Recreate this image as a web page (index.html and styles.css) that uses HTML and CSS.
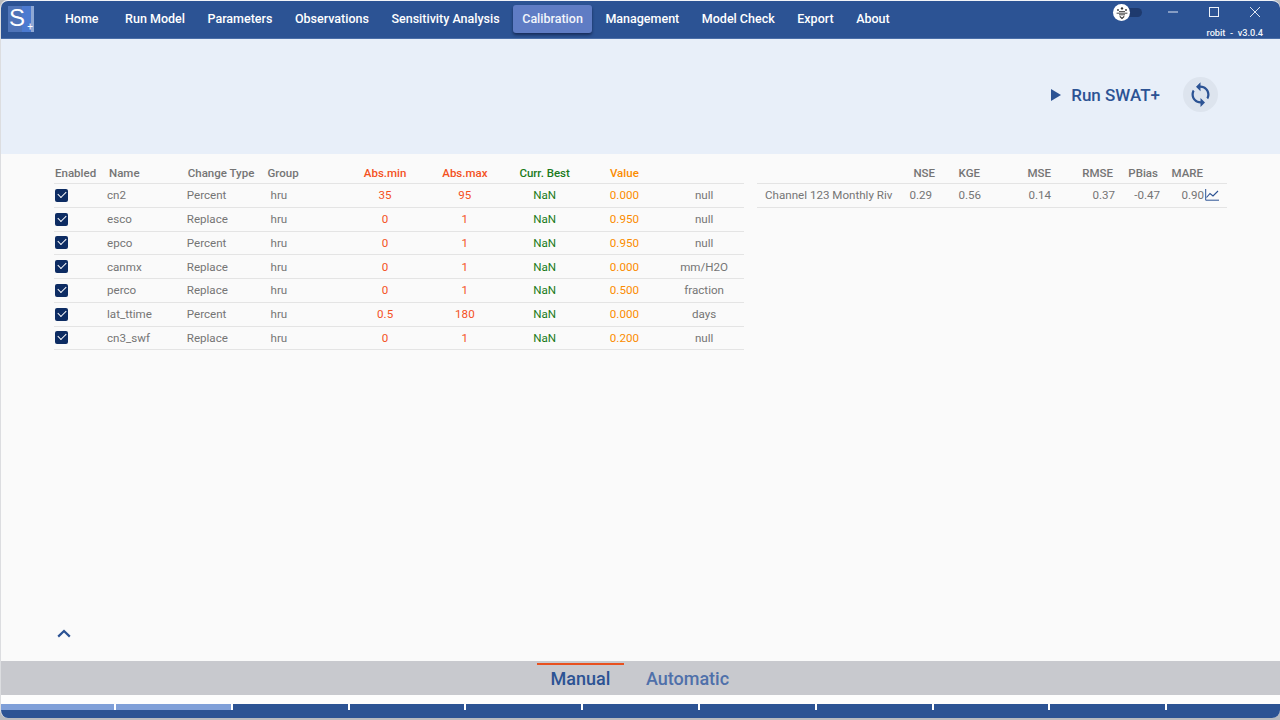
FILE: index.html
```html
<!DOCTYPE html>
<html lang="en">
<head>
<meta charset="utf-8">
<title>SWAT+ Calibration</title>
<link rel="stylesheet" href="styles.css">
</head>
<body>
<div class="window">
  <header class="topbar">
    <div class="logo"><span class="logo-s">S</span><span class="logo-plus">+</span></div>
    <nav class="nav">
      <a class="nav-item home">Home</a>
      <a class="nav-item">Run Model</a>
      <a class="nav-item">Parameters</a>
      <a class="nav-item">Observations</a>
      <a class="nav-item">Sensitivity Analysis</a>
      <a class="nav-item active">Calibration</a>
      <a class="nav-item">Management</a>
      <a class="nav-item">Model Check</a>
      <a class="nav-item">Export</a>
      <a class="nav-item">About</a>
    </nav>
    <div class="winbox">
      <div class="winctl">
        <div class="toggle">
          <span class="knob">
            <svg viewBox="0 0 16 16" width="16" height="16"><circle cx="8" cy="3.4" r="1.2" fill="#333"/><circle cx="4" cy="5" r=".9" fill="#333"/><circle cx="12" cy="5" r=".9" fill="#333"/><path d="M2.6 8.2h10.8M5 6.6h6M5 9.8h6" stroke="#333" stroke-width=".9" fill="none"/><path d="M5.8 11.4 8 13.4l2.2-2" stroke="#333" stroke-width="1.2" fill="none"/></svg>
          </span>
        </div>
        <svg class="wc wc-min" viewBox="0 0 10 10" width="10" height="10"><path d="M0 5h10" stroke="#dfe6f2" stroke-width="1"/></svg>
        <svg class="wc wc-max" viewBox="0 0 10 10" width="10" height="10"><rect x=".5" y=".5" width="9" height="9" fill="none" stroke="#eef2f8" stroke-width="1"/></svg>
        <svg class="wc wc-close" viewBox="0 0 10 10" width="10" height="10"><path d="M0 0l10 10M10 0 0 10" stroke="#dfe6f2" stroke-width="1"/></svg>
      </div>
      <div class="version">robit &nbsp;-&nbsp; v3.0.4</div>
    </div>
  </header>

  <section class="banner">
    <button class="run">
      <svg viewBox="0 0 10 12" width="10" height="12"><path d="M0 0l10 6-10 6z" fill="#2c5394"/></svg>
      <span>Run SWAT+</span>
    </button>
    <button class="refresh">
      <svg viewBox="0 0 24 24" width="27" height="27"><path fill="#2c5394" d="M12 4V1L8 5l4 4V6c3.31 0 6 2.69 6 6 0 1.01-.25 1.97-.7 2.8l1.46 1.46C19.54 15.03 20 13.57 20 12c0-4.42-3.58-8-8-8zm0 14c-3.31 0-6-2.69-6-6 0-1.01.25-1.97.7-2.8L5.24 7.74C4.46 8.97 4 10.43 4 12c0 4.42 3.58 8 8 8v3l4-4-4-4v3z"/></svg>
    </button>
  </section>

  <main class="content">
    <div class="tables">
      <div class="ptable">
        <div class="prow phead">
          <span class="h-en">Enabled</span><span class="h-name">Name</span><span class="h-type">Change Type</span><span class="h-group">Group</span>
          <span class="ctr red">Abs.min</span><span class="ctr red">Abs.max</span><span class="ctr green">Curr. Best</span><span class="ctr orange">Value</span><span></span>
        </div>
        <div class="prow"><span class="check"></span><span class="cell">cn2</span><span class="cell">Percent</span><span class="c-group">hru</span><span class="ctr red">35</span><span class="ctr red">95</span><span class="ctr green">NaN</span><span class="ctr orange">0.000</span><span class="ctr">null</span></div>
        <div class="prow"><span class="check"></span><span class="cell">esco</span><span class="cell">Replace</span><span class="c-group">hru</span><span class="ctr red">0</span><span class="ctr red">1</span><span class="ctr green">NaN</span><span class="ctr orange">0.950</span><span class="ctr">null</span></div>
        <div class="prow"><span class="check"></span><span class="cell">epco</span><span class="cell">Percent</span><span class="c-group">hru</span><span class="ctr red">0</span><span class="ctr red">1</span><span class="ctr green">NaN</span><span class="ctr orange">0.950</span><span class="ctr">null</span></div>
        <div class="prow"><span class="check"></span><span class="cell">canmx</span><span class="cell">Replace</span><span class="c-group">hru</span><span class="ctr red">0</span><span class="ctr red">1</span><span class="ctr green">NaN</span><span class="ctr orange">0.000</span><span class="ctr">mm/H2O</span></div>
        <div class="prow"><span class="check"></span><span class="cell">perco</span><span class="cell">Replace</span><span class="c-group">hru</span><span class="ctr red">0</span><span class="ctr red">1</span><span class="ctr green">NaN</span><span class="ctr orange">0.500</span><span class="ctr">fraction</span></div>
        <div class="prow"><span class="check"></span><span class="cell">lat_ttime</span><span class="cell">Percent</span><span class="c-group">hru</span><span class="ctr red">0.5</span><span class="ctr red">180</span><span class="ctr green">NaN</span><span class="ctr orange">0.000</span><span class="ctr">days</span></div>
        <div class="prow"><span class="check"></span><span class="cell">cn3_swf</span><span class="cell">Replace</span><span class="c-group">hru</span><span class="ctr red">0</span><span class="ctr red">1</span><span class="ctr green">NaN</span><span class="ctr orange">0.200</span><span class="ctr">null</span></div>
      </div>

      <div class="stable">
        <div class="srow shead phead">
          <span></span><span>NSE</span><span>KGE</span><span>MSE</span><span>RMSE</span><span>PBias</span><span>MARE</span><span></span>
        </div>
        <div class="srow sbody">
          <span class="s-name">Channel 123 Monthly Riv</span><span>0.29</span><span>0.56</span><span>0.14</span><span>0.37</span><span>-0.47</span><span>0.90</span>
          <svg class="chart" viewBox="0 0 14 12" width="14" height="12"><path d="M.7 0v11.2H14" fill="none" stroke="#2c5394" stroke-width="1"/><path d="M1.5 8.5 5 4.5l3 2.5 5-5" fill="none" stroke="#2c5394" stroke-width="1.1"/></svg>
        </div>
      </div>
    </div>
    <div class="collapse">
      <svg viewBox="0 0 14 9" width="14" height="9"><path d="M1.2 7.6 7 2l5.8 5.6" fill="none" stroke="#2c5394" stroke-width="2.2"/></svg>
    </div>
  </main>

  <div class="tabs">
    <div class="tab selected">Manual</div>
    <div class="tab">Automatic</div>
  </div>

  <div class="spacer"></div>

  <div class="steps">
    <span class="step done"></span><span class="step done"></span><span class="step"></span><span class="step"></span><span class="step"></span><span class="step"></span><span class="step"></span><span class="step"></span><span class="step"></span><span class="step"></span><span class="step last"></span>
  </div>
</div>
</body>
</html>
```
FILE: styles.css
```css
* { box-sizing: border-box; }
html, body { margin: 0; padding: 0; height: 100%; background: #b9bbbf; overflow: hidden; }
body { font-family: Roboto, "Liberation Sans", sans-serif; color: #757575; }

.window {
  width: 1280px;
  height: 718px;
  display: flex;
  flex-direction: column;
  background: #fafafa;
  border-top: 1px solid #f2f4f8;
  border-left: 1px solid #dcdde0;
  border-radius: 8px;
  overflow: hidden;
}

/* top bar */
.topbar {
  flex: 0 0 38px;
  display: flex;
  align-items: flex-start;
  background: #2c5394;
  border-bottom: 1px solid #4a6ea8;
  padding-left: 7px;
}
.logo {
  position: relative;
  flex: none;
  width: 26px;
  height: 26px;
  margin-top: 5px;
  background: linear-gradient(90deg, #4f74b8 0 55%, #4c7ad0 55% 88%, #8fa8d4 88%);
}
.logo-s {
  position: absolute;
  left: 1px;
  top: -1px;
  font-size: 24px;
  line-height: 26px;
  color: #fff;
  font-family: "Liberation Sans", sans-serif;
}
.logo-plus {
  position: absolute;
  right: 1px;
  bottom: 0;
  font-size: 10px;
  line-height: 11px;
  color: #fff;
}
.nav {
  display: flex;
  gap: 4.55px;
  margin-left: 22px;
  margin-top: 4px;
}
.nav-item {
  height: 28px;
  padding: 0 9px;
  font-size: 12.5px;
  font-weight: 500;
  line-height: 28px;
  color: #fff;
  border-radius: 3px;
  white-space: nowrap;
}
.nav-item.home { margin-right: 4px; }
.nav-item.active {
  background: #5f7cc4;
  color: #f2f5fb;
  box-shadow: 0 2px 3px rgba(10, 25, 60, .65);
}
.winbox {
  margin-left: auto;
  flex: none;
  width: 170px;
  display: flex;
  flex-direction: column;
  align-items: flex-end;
}
.winctl {
  display: flex;
  align-items: center;
  width: 170px;
  height: 24px;
}
.toggle {
  position: relative;
  width: 24px;
  height: 9px;
  margin-left: 8px;
  margin-top: -1px;
  border-radius: 5px;
  background: #1e3a6e;
}
.knob {
  position: absolute;
  left: -5px;
  top: -4px;
  width: 17px;
  height: 17px;
  display: flex;
  align-items: center;
  justify-content: center;
  border-radius: 50%;
  background: #fff;
}
.wc { flex: none; margin-top: -2px; }
.wc-min { margin-left: 26px; }
.wc-max { margin-left: 31px; }
.wc-close { margin-left: 31px; }
.version {
  margin-top: 2px;
  margin-right: 17px;
  font-size: 9.2px;
  line-height: 11px;
  font-weight: 500;
  color: #f0f3f9;
  white-space: nowrap;
}

/* banner */
.banner {
  flex: 0 0 115px;
  display: flex;
  align-items: center;
  justify-content: flex-end;
  padding-right: 62px;
  padding-bottom: 3px;
  background: #e8eff9;
}
.run {
  display: flex;
  align-items: center;
  gap: 10px;
  padding: 0;
  border: 0;
  background: none;
  font: 500 17px/20px Roboto, sans-serif;
  color: #2c5394;
}
.refresh {
  display: flex;
  align-items: center;
  justify-content: center;
  width: 35px;
  height: 35px;
  margin-left: 23px;
  margin-bottom: 2px;
  padding: 0;
  border: 0;
  border-radius: 50%;
  background: #dde4ee;
}

/* content */
.content {
  flex: 1;
  display: flex;
  flex-direction: column;
  min-height: 0;
}
.tables {
  display: flex;
  align-items: flex-start;
  padding: 7px 0 0 53px;
  gap: 13px;
}
.ptable { width: 690px; }
.prow {
  display: grid;
  grid-template-columns: 52px repeat(8, 1fr);
  align-items: center;
  height: 23.75px;
  font-size: 11.6px;
  color: #757575;
  border-bottom: 1px solid #e4e4e4;
}
.phead { font-weight: 500; color: #757575; }
.prow.phead { height: 23px; padding-top: 2px; font-size: 11.5px; }
.ctr { text-align: center; }
.red { color: #f4511e; }
.green { color: #1b7a1b; }
.orange { color: #fb8c00; }
.h-en { margin-left: 1px; }
.h-name { margin-left: 3px; }
.h-type { margin-left: 2px; white-space: nowrap; }
.h-group { margin-left: 2px; }
.cell { margin-left: 1px; }
.c-group { margin-left: 5px; }
.check {
  position: relative;
  width: 13px;
  height: 13px;
  margin-left: 1px;
  border-radius: 2px;
  background: #0d2c63;
}
.check::after {
  content: "";
  position: absolute;
  left: 3px;
  top: 2px;
  width: 7px;
  height: 4px;
  border-left: 1.6px solid #fff;
  border-bottom: 1.6px solid #fff;
  transform: rotate(-45deg);
}

.stable { width: 470px; }
.srow {
  display: grid;
  align-items: center;
  font-size: 11.6px;
  border-bottom: 1px solid #e4e4e4;
  white-space: nowrap;
  text-align: right;
}
.shead {
  height: 23px;
  padding-top: 2px;
  font-size: 11.5px;
  grid-template-columns: 140px 38px 45px 71px 62px 45px 45px 24px;
}
.sbody {
  height: 24px;
  padding-bottom: 1px;
  grid-template-columns: 140px 35px 49px 70px 64px 45px 44px 23px;
}
.s-name { margin-left: 8px; text-align: left; }
.chart { margin-left: 1px; margin-top: -1px; }

.collapse {
  margin-top: auto;
  padding: 0 0 23px 56px;
  line-height: 0;
}

/* tabs */
.tabs {
  flex: 0 0 34px;
  display: flex;
  justify-content: center;
  gap: 20px;
  padding-right: 13px;
  background: #c8c9ce;
}
.tab {
  width: 87px;
  margin-top: 2px;
  border-top: 2px solid transparent;
  text-align: center;
  font-size: 18px;
  font-weight: 500;
  line-height: 28px;
  color: #4f70aa;
}
.tab.selected { border-top-color: #e8501e; color: #2c5394; }

.spacer { flex: 0 0 9px; background: #fdfdfd; }

/* progress */
.steps {
  flex: 0 0 14px;
  display: flex;
  align-items: flex-start;
  background: #2c5394;
}
.step {
  flex: 0 0 116.8px;
  height: 6px;
  border-right: 2px solid #fff;
}
.step.done { background: #7f9fd8; }
.step:first-child { flex-basis: 115px; }
.step.last { border-right: 0; }
```
